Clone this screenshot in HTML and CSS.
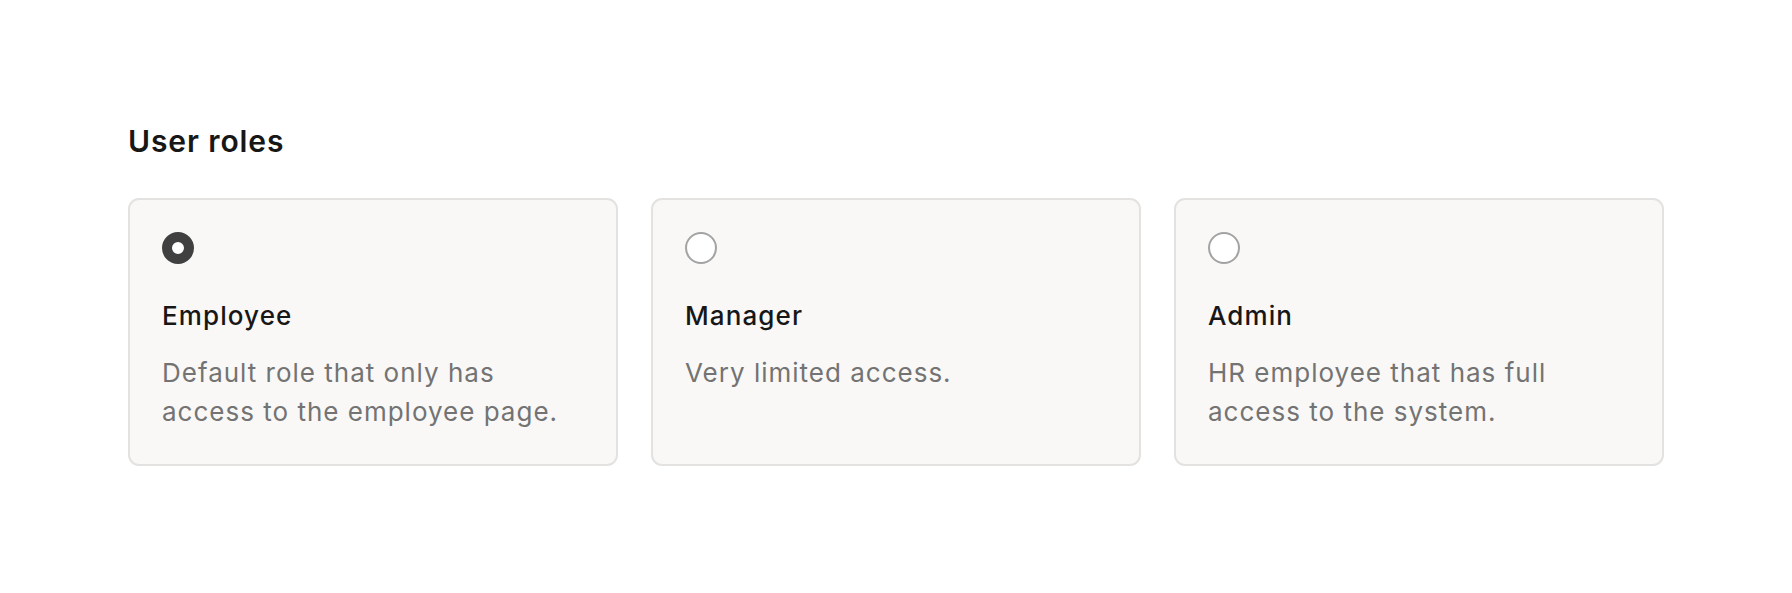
FILE: index.html
```html
<!DOCTYPE html>
<html lang="en">
<head>
<meta charset="utf-8">
<title>User roles</title>
<link rel="stylesheet" href="styles.css">
</head>
<body>
<main class="page">
  <h2 class="heading">User roles</h2>
  <div class="roles">
    <label class="role">
      <span class="radio radio--checked"></span>
      <span class="role-title">Employee</span>
      <span class="role-desc">Default role that only has access to the employee page.</span>
    </label>
    <label class="role">
      <span class="radio"></span>
      <span class="role-title">Manager</span>
      <span class="role-desc">Very limited access.</span>
    </label>
    <label class="role">
      <span class="radio"></span>
      <span class="role-title">Admin</span>
      <span class="role-desc">HR employee that has full access to the system.</span>
    </label>
  </div>
</main>
</body>
</html>
```

FILE: styles.css
```css
* { box-sizing: border-box; }
html, body { margin: 0; background: #ffffff; }
body {
  font-family: Inter, "Noto Sans", "Liberation Sans", sans-serif;
  color: #171717;
}
.page {
  width: 1536px;
  margin: 0 auto;
  padding-top: 123px;
}
.heading {
  margin: 0;
  font-size: 30px;
  line-height: 36px;
  font-weight: 600;
  letter-spacing: 0.9px;
  color: #171717;
}
.roles {
  margin-top: 39px;
  display: grid;
  grid-template-columns: repeat(3, 1fr);
  gap: 33px;
}
.role {
  display: flex;
  flex-direction: column;
  align-items: flex-start;
  background: #f9f8f6;
  border: 2px solid #e3e2e0;
  border-radius: 11px;
  padding: 32px 32px 33px;
}
.radio {
  width: 32px;
  height: 32px;
  border-radius: 50%;
  background: #ffffff;
  border: 2px solid #a3a3a3;
}
.radio--checked {
  background: #ffffff;
  border: 10.5px solid #404040;
}
.role-title {
  margin-top: 34px;
  font-size: 26px;
  line-height: 36px;
  font-weight: 500;
  letter-spacing: 1.1px;
  color: #171717;
}
.role-desc {
  margin-top: 19px;
  width: 400px;
  font-size: 26px;
  line-height: 39px;
  font-weight: 400;
  letter-spacing: 1px;
  color: #737373;
}
```
